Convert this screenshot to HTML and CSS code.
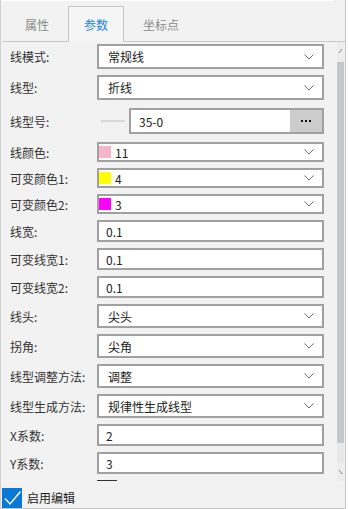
FILE: index.html
```html
<!DOCTYPE html>
<html lang="zh-CN">
<head>
    <meta charset="UTF-8">
    <meta name="viewport" content="width=device-width, initial-scale=1.0">
    <title>线参数</title>
    <link rel="stylesheet" href="styles.css">
</head>
<body>
    <div class="panel">
        <div class="edge"></div>
        <div class="tabs">
            <div class="tab">属性</div>
            <div class="tab active">参数</div>
            <div class="tab">坐标点</div>
        </div>

        <div class="main">
            <div class="scroll">
                <div class="row tall">
                    <div class="label">线模式:</div>
                    <div class="field select"><span class="value">常规线</span><svg class="chev" width="10" height="6"><polyline points="0.5,0.5 5,5 9.5,0.5"/></svg></div>
                </div>
                <div class="row tall">
                    <div class="label">线型:</div>
                    <div class="field select"><span class="value">折线</span><svg class="chev" width="10" height="6"><polyline points="0.5,0.5 5,5 9.5,0.5"/></svg></div>
                </div>
                <div class="row linetype">
                    <div class="label">线型号:</div>
                    <div class="line-icon"><span></span></div>
                    <div class="field picker">
                        <span class="value">35-0</span>
                        <div class="more"><i></i><i></i><i></i></div>
                    </div>
                </div>
                <div class="row color">
                    <div class="label">线颜色:</div>
                    <div class="field select swatched"><span class="swatch pink"></span><span class="value">11</span><svg class="chev" width="10" height="6"><polyline points="0.5,0.5 5,5 9.5,0.5"/></svg></div>
                </div>
                <div class="row color">
                    <div class="label">可变颜色1:</div>
                    <div class="field select swatched"><span class="swatch yellow"></span><span class="value">4</span><svg class="chev" width="10" height="6"><polyline points="0.5,0.5 5,5 9.5,0.5"/></svg></div>
                </div>
                <div class="row color">
                    <div class="label">可变颜色2:</div>
                    <div class="field select swatched"><span class="swatch magenta"></span><span class="value">3</span><svg class="chev" width="10" height="6"><polyline points="0.5,0.5 5,5 9.5,0.5"/></svg></div>
                </div>
                <div class="row num">
                    <div class="label">线宽:</div>
                    <div class="field input">0.1</div>
                </div>
                <div class="row num">
                    <div class="label">可变线宽1:</div>
                    <div class="field input">0.1</div>
                </div>
                <div class="row num">
                    <div class="label">可变线宽2:</div>
                    <div class="field input">0.1</div>
                </div>
                <div class="row">
                    <div class="label">线头:</div>
                    <div class="field select"><span class="value">尖头</span><svg class="chev" width="10" height="6"><polyline points="0.5,0.5 5,5 9.5,0.5"/></svg></div>
                </div>
                <div class="row">
                    <div class="label">拐角:</div>
                    <div class="field select"><span class="value">尖角</span><svg class="chev" width="10" height="6"><polyline points="0.5,0.5 5,5 9.5,0.5"/></svg></div>
                </div>
                <div class="row">
                    <div class="label">线型调整方法:</div>
                    <div class="field select"><span class="value">调整</span><svg class="chev" width="10" height="6"><polyline points="0.5,0.5 5,5 9.5,0.5"/></svg></div>
                </div>
                <div class="row">
                    <div class="label">线型生成方法:</div>
                    <div class="field select"><span class="value">规律性生成线型</span><svg class="chev" width="10" height="6"><polyline points="0.5,0.5 5,5 9.5,0.5"/></svg></div>
                </div>
                <div class="row num">
                    <div class="label">X系数:</div>
                    <div class="field input">2</div>
                </div>
                <div class="row num">
                    <div class="label">Y系数:</div>
                    <div class="field input">3</div>
                </div>
                <div class="row num clipped">
                    <div class="stub"></div>
                </div>
            </div>

            <div class="scrollbar">
                <div class="sb-btn up"><svg width="7" height="20"><polyline points="2,11 5,7"/></svg></div>
                <div class="sb-thumb"></div>
                <div class="sb-track"></div>
                <div class="sb-btn down"><svg width="7" height="18"><polyline points="2,7 5,11 5,10"/></svg></div>
            </div>
        </div>

        <div class="footer">
            <span class="checkbox"><svg width="20" height="20"><polyline points="3,10.5 8,16 18.5,3.5"/></svg></span>
            <span class="check-label">启用编辑</span>
        </div>
    </div>
</body>
</html>
```

FILE: styles.css
```css
body {
    margin: 0;
    font-family: "Noto Sans CJK SC", "Noto Sans", sans-serif;
    font-size: 12px;
    color: #333;
    background-color: white;
}
.panel {
    width: 346px;
    height: 509px;
    box-sizing: border-box;
    border-left: 1px solid #d0d0d0;
    border-right: 1px solid #c4c4c4;
    border-bottom: 1px solid #c4c4c4;
    background-color: #f2f2f2;
    display: flex;
    flex-direction: column;
}
.edge {
    height: 1px;
    width: 332px;
    background-color: white;
}

/* tabs */
.tabs {
    height: 41px;
    box-sizing: border-box;
    margin-left: 2px;
    padding: 5px 0 0 6px;
    border-bottom: 1px solid #c8c8c8;
    display: flex;
    align-items: flex-start;
}
.tab {
    height: 36px;
    box-sizing: border-box;
    padding: 0 15px 1px;
    margin-right: 3px;
    border: 1px solid transparent;
    border-bottom: none;
    display: flex;
    align-items: center;
    color: #8c8c8c;
    font-size: 12px;
}
.tab.active {
    border-color: #c8c8c8;
    background-color: #f5f5f5;
    color: #1a82dd;
}

/* rows */
.main {
    height: 439px;
    display: flex;
}
.scroll {
    flex: 1;
    overflow: hidden;
    padding-top: 2px;
    display: flex;
    flex-direction: column;
    gap: 6px;
}
.row {
    height: 24px;
    flex-shrink: 0;
    padding-left: 9px;
    display: flex;
    align-items: center;
}
.row.tall {
    height: 25px;
}
.row.linetype {
    height: 26px;
    margin: 2px 0;
}
.row.color {
    height: 20px;
}
.row.num {
    height: 22px;
}
.label {
    width: 87px;
    flex-shrink: 0;
    color: #333;
    white-space: nowrap;
}
.field {
    width: 227px;
    height: 100%;
    box-sizing: border-box;
    border: 2px solid #a0a0a0;
    background-color: white;
    display: flex;
    align-items: center;
    color: #222;
    white-space: nowrap;
}
.field .value {
    flex: 1;
}
.select {
    padding: 0 8px 0 9px;
}
.select.swatched {
    padding-left: 0;
}
.input {
    padding-left: 7px;
}
.chev {
    flex-shrink: 0;
}
.chev polyline {
    fill: none;
    stroke: #6e6e6e;
    stroke-width: 1;
}
.swatch {
    width: 12px;
    height: 12px;
    margin-right: 4px;
    flex-shrink: 0;
}
.swatch.pink {
    background-color: #f7b5cc;
}
.swatch.yellow {
    background-color: #ffff00;
}
.swatch.magenta {
    background-color: #ff00ff;
}

/* line type picker */
.line-icon {
    width: 32px;
    display: flex;
    justify-content: center;
}
.line-icon span {
    width: 24px;
    height: 2px;
    background-color: #d8d8d8;
}
.picker {
    width: 195px;
    padding-left: 8px;
}
.more {
    width: 32px;
    height: 100%;
    background-color: #cccccc;
    display: flex;
    justify-content: center;
    align-items: center;
    gap: 2px;
}
.more i {
    width: 2px;
    height: 2px;
    background-color: #111;
}
.stub {
    width: 20px;
    height: 21px;
    margin-left: 87px;
    border-top: 1px solid #333;
    align-self: flex-start;
}

/* scrollbar */
.scrollbar {
    width: 7px;
    margin-right: 1px;
    display: flex;
    flex-direction: column;
    background-color: #e8e8e8;
}
.sb-btn {
    background-color: #ededed;
}
.sb-btn.up {
    height: 20px;
}
.sb-btn.down {
    height: 18px;
}
.sb-btn polyline {
    fill: none;
    stroke: #8a8a8a;
    stroke-width: 1;
}
.sb-thumb {
    height: 381px;
    background-color: #c3c7c9;
}
.sb-track {
    flex: 1;
}

/* footer */
.footer {
    flex: 1;
    padding: 6px 0 0 1px;
    display: flex;
    align-items: center;
    gap: 5px;
}
.checkbox {
    width: 20px;
    height: 20px;
    background-color: #0a78d6;
    display: flex;
}
.checkbox polyline {
    fill: none;
    stroke: white;
    stroke-width: 1.4;
}
.check-label {
    color: #222;
}
```
